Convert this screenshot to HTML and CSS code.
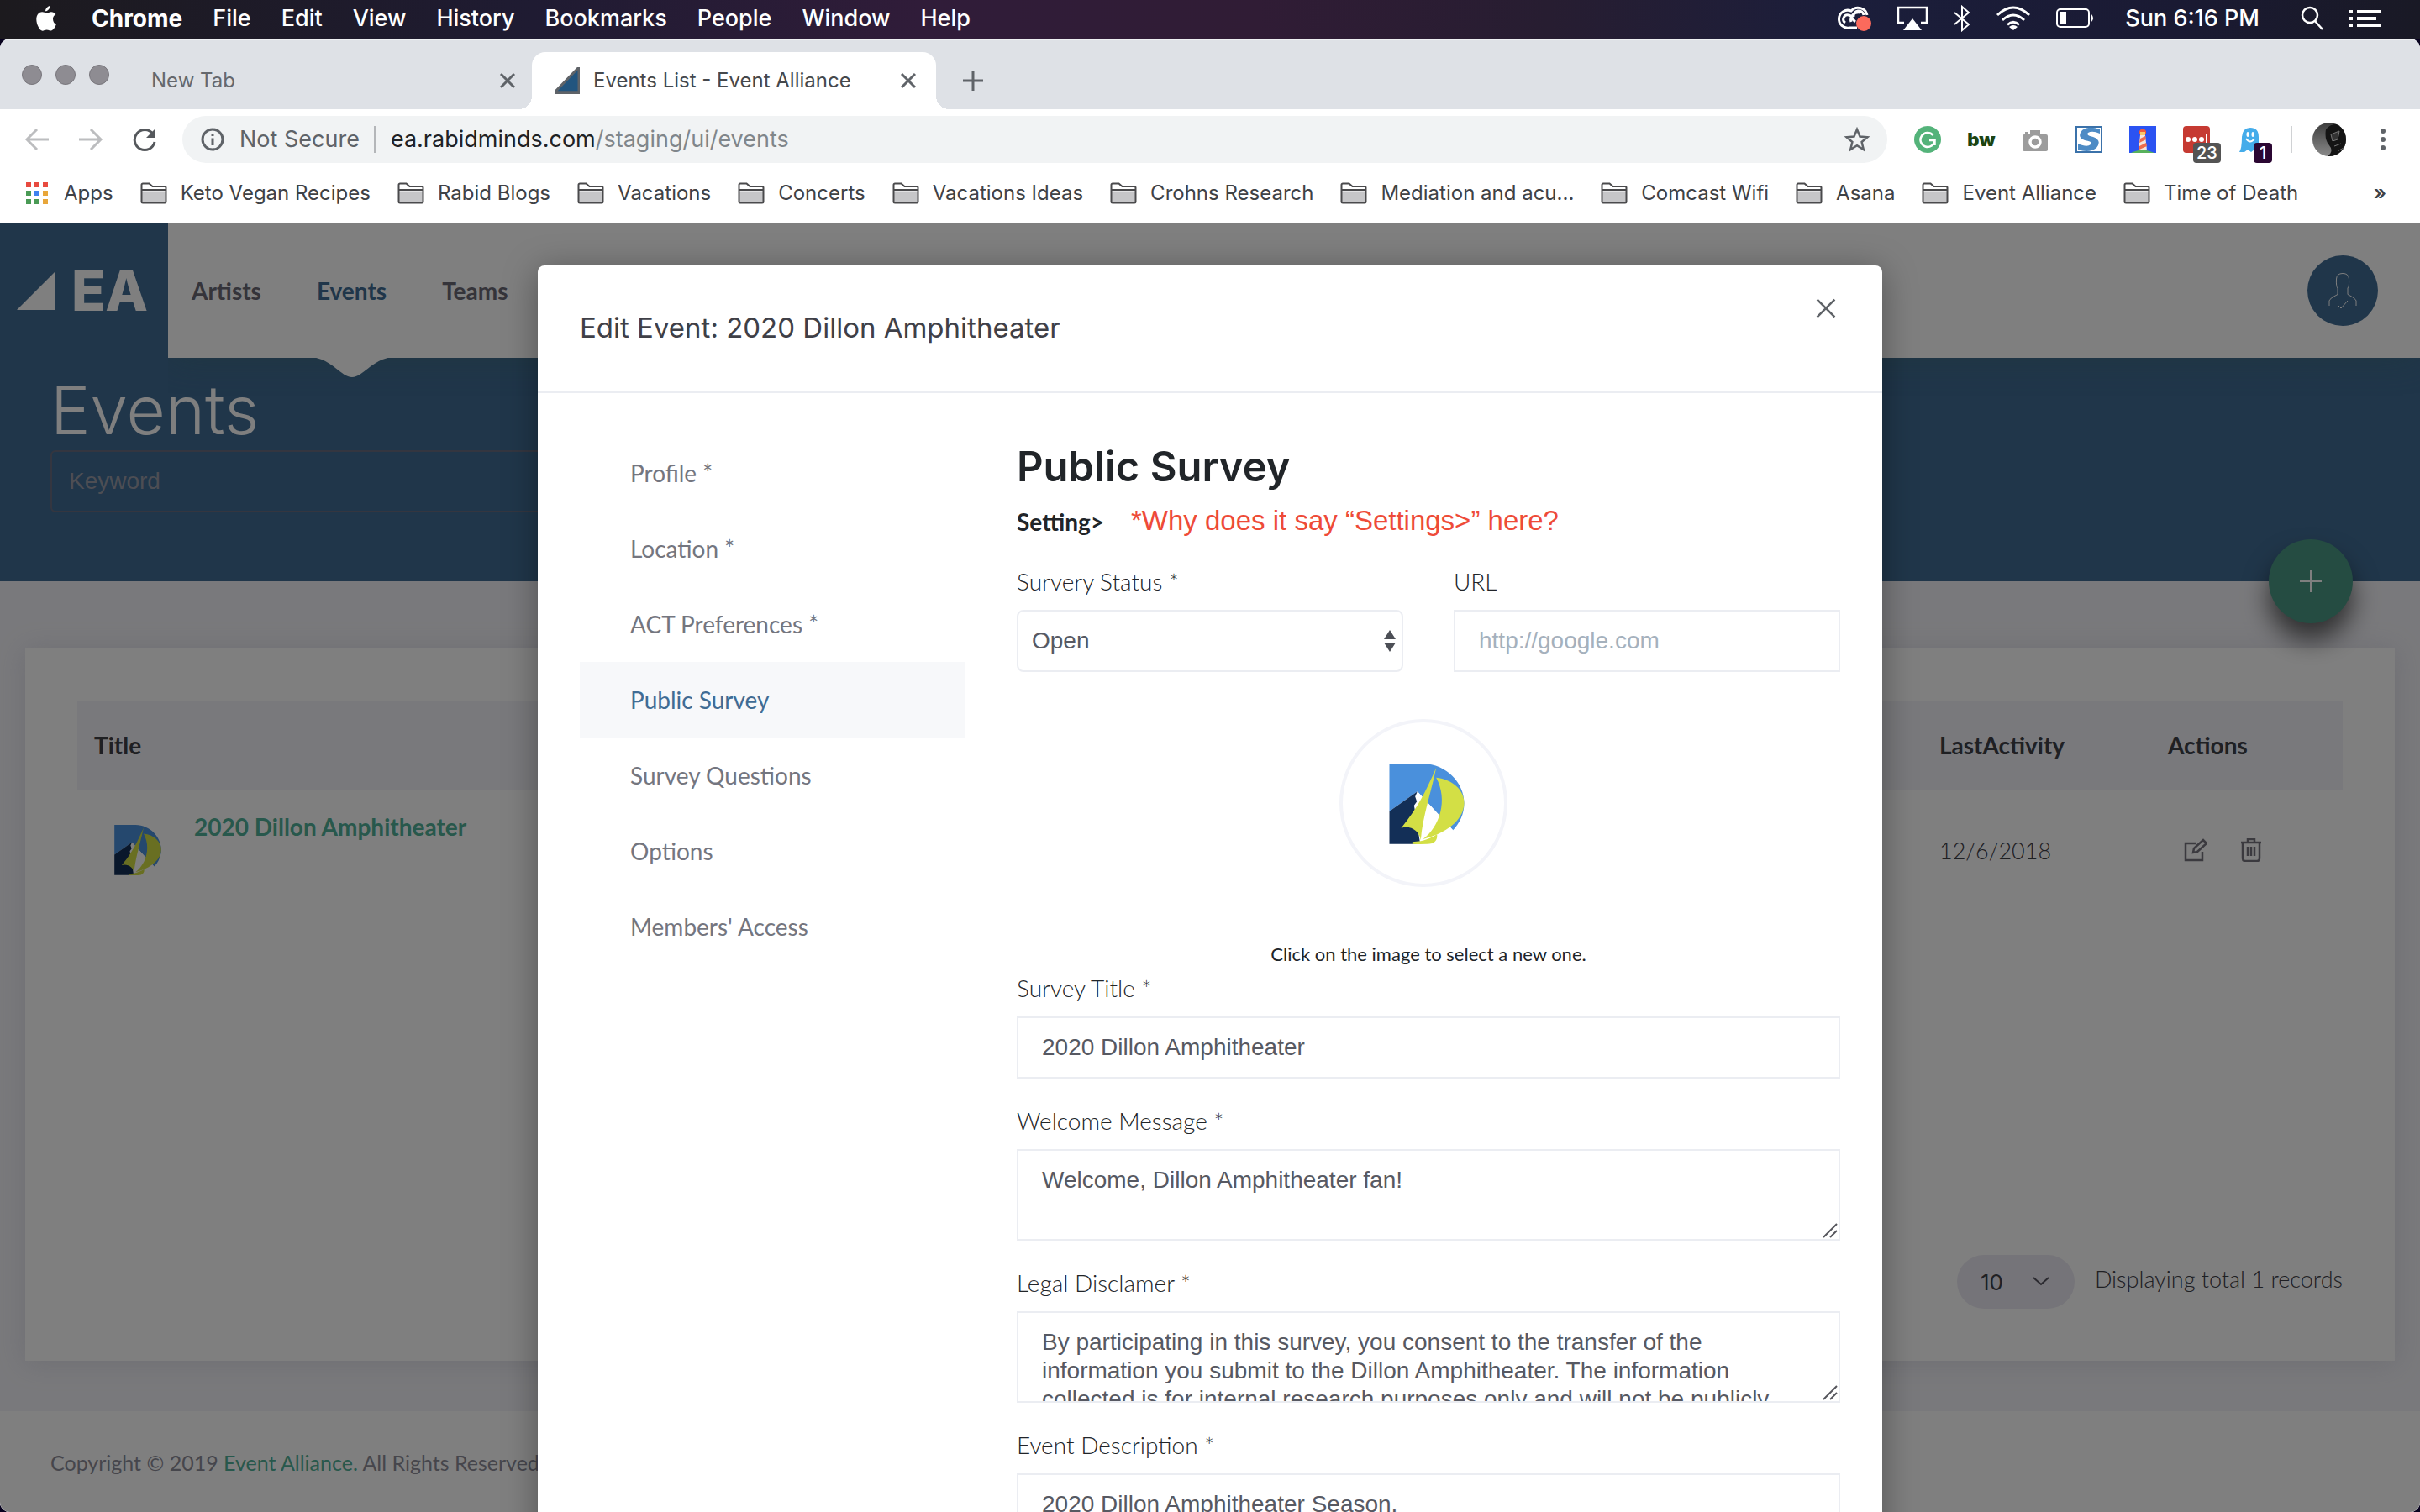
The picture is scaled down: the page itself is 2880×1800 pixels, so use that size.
FILE: index.html
```html
<!DOCTYPE html>
<html lang="en">
<head>
<meta charset="utf-8">
<title>Events List - Event Alliance</title>
<link rel="stylesheet" href="styles.css">
</head>
<body>
<svg class="defs" aria-hidden="true">
  <symbol id="folder" viewBox="0 0 32 26">
    <path d="M1.500 10.500h29V23a1.500 1.500 0 0 1-1.500 1.500H3A1.500 1.500 0 0 1 1.500 23z" fill="#c6c6c8"/>
    <path d="M1.500 3A1.500 1.500 0 0 1 3 1.500h7.500l4 3.500H29a1.500 1.500 0 0 1 1.500 1.500V23a1.500 1.500 0 0 1-1.500 1.500H3A1.500 1.500 0 0 1 1.500 23zM1.500 9h29" fill="none" stroke="#4a4a4c" stroke-width="2"/>
  </symbol>
  <symbol id="dillon" viewBox="0 0 267 288">
    <path d="M0 0H120C205 2 267 70 267 142C267 180 250 215 227 238L100 100L0 170Z" fill="#4a90dc"/>
    <path d="M100 100L227 238L120 282H90V120Z" fill="#fff"/>
    <path d="M0 170L100 100L92 118L98 136L88 150L92 172L110 287H0Z" fill="#132f57"/>
    <path d="M167 15C130 100 100 160 42 230C75 220 108 240 112 274C118 190 150 100 167 15Z" fill="#d3df45"/>
    <path d="M167 50C225 56 268 95 267 142C265 205 200 250 120 270C180 225 210 130 167 50Z" fill="#d3df45"/>
    <path d="M82 280L112 277C140 270 156 262 170 252C172 270 165 280 152 285Q130 289 82 287Z" fill="#d3df45"/>
  </symbol>
  <symbol id="close" viewBox="0 0 20 20"><path d="M2 2L18 18M18 2L2 18"/></symbol>
</svg>

<div class="menubar">
  <svg class="apple" viewBox="0 0 24 30"><path fill="#fff" d="M16.500 0c.2 3-2.500 6.300-5.400 6.300C10.900 3.400 13.500.4 16.500 0zM20 15.600c0-2.800 1.500-4.500 3.400-5.700-1.300-1.900-3.300-2.700-5.400-2.700-2.400 0-3.800 1.300-5.500 1.300-1.800 0-3.200-1.200-5.400-1.200C3.700 7.300.3 10.300.3 16c0 6 4 13.700 7.300 13.700 1.700 0 2.700-1.200 5-1.200s3 1.100 4.900 1.100c3.100 0 5.700-5.500 6.300-7.500-2.500-1-3.800-3.600-3.800-6.500z"/></svg>
  <nav class="menus">
    <strong>Chrome</strong><span>File</span><span>Edit</span><span>View</span><span>History</span><span>Bookmarks</span><span>People</span><span>Window</span><span>Help</span>
  </nav>
  <div class="status">
    <svg width="42" height="32" viewBox="0 0 42 32"><g fill="none" stroke="#fff" stroke-width="3"><path d="M36 12A11 11 0 0 0 17 7A10.500 10.500 0 1 0 15 27H24"/><path d="M10 21A5 5 0 0 1 14 12C18 12 18 17 22 20M17 20A9 9 0 0 1 28 9M20 14A6 6 0 0 1 32 12"/></g><circle cx="32" cy="22" r="9" fill="#fb6a5c"/></svg>
    <svg width="38" height="30" viewBox="0 0 38 30"><path d="M9 20H2V2H36V20H29" fill="none" stroke="#fff" stroke-width="2.500"/><path d="M19 15L30 29H8Z" fill="#fff"/></svg>
    <svg width="22" height="32" viewBox="0 0 22 32"><path d="M2 9L19 23L11 30V2L19 9L2 23" fill="none" stroke="#fff" stroke-width="2"/></svg>
    <svg width="42" height="30" viewBox="0 0 42 30"><g fill="none" stroke="#fff" stroke-width="3"><path d="M2 11Q21-7 40 11M8 17Q21 5 34 17M14 22.500Q21 16 28 22.500"/></g><path d="M21 29L16 25Q21 21 26 25Z" fill="#fff"/></svg>
    <svg width="48" height="26" viewBox="0 0 48 26"><rect x="2" y="2" width="38" height="21" rx="4" fill="none" stroke="#fff" stroke-width="2"/><rect x="5" y="5" width="8" height="15" fill="#fff"/><path d="M43 8Q47 12.500 43 17Z" fill="#fff"/></svg>
    <span class="clock">Sun 6:16 PM</span>
    <svg width="30" height="30" viewBox="0 0 30 30"><g fill="none" stroke="#fff" stroke-width="2.500"><circle cx="12" cy="11" r="9"/><path d="M18 18L27 28"/></g></svg>
    <svg width="38" height="22" viewBox="0 0 38 22"><path d="M0 3H4M9 3H38M0 11H4M9 11H32M0 19H4M9 19H38" stroke="#fff" stroke-width="4"/></svg>
  </div>
</div>

<div class="window">
  <div class="tabstrip">
    <div class="lights"><i></i><i></i><i></i></div>
    <div class="tab"><span>New Tab</span><button aria-label="Close New Tab"><svg width="20" height="20"><use href="#close"/></svg></button></div>
    <div class="tab active">
      <svg width="30" height="32" viewBox="0 0 30 32"><path d="M29 0V30H0Z" fill="#22557f"/><path d="M0 30H29V32H0Z" fill="#a9c3d8"/></svg>
      <span>Events List - Event Alliance</span><button aria-label="Close Events List"><svg width="20" height="20"><use href="#close"/></svg></button>
    </div>
    <button class="newtab" aria-label="New tab"><svg width="26" height="26" viewBox="0 0 26 26"><path d="M13 1V25M1 13H25"/></svg></button>
  </div>

  <div class="toolbar">
    <div class="arrows">
      <svg width="30" height="30" viewBox="0 0 30 30"><path d="M29 15H3M15 3L3 15L15 27" stroke="#bcbdbf"/></svg>
      <svg width="30" height="30" viewBox="0 0 30 30"><path d="M1 15H27M15 3L27 15L15 27" stroke="#bcbdbf"/></svg>
      <svg width="30" height="30" viewBox="0 0 30 30"><path d="M25 8.500A12 12 0 1 0 27 18" stroke="#55585c"/><path d="M28 2V13H17Z" fill="#55585c" stroke="none"/></svg>
    </div>
    <div class="omnibox">
      <svg width="28" height="28" viewBox="0 0 28 28"><circle cx="14" cy="14" r="12" fill="none" stroke="#5f6368" stroke-width="3"/><path d="M14 12.500V21M14 7V10" stroke="#5f6368" stroke-width="3"/></svg>
      <span class="secure">Not Secure</span>
      <span class="url">ea.rabidminds.com<em>/staging/ui/events</em></span>
      <svg class="star" width="30" height="30" viewBox="0 0 30 30"><path d="M15 3L18.500 11.500L27.500 12.200L20.600 18L22.800 27L15 22.200L7.200 27L9.400 18L2.500 12.200L11.500 11.500Z" fill="none" stroke="#5f6368" stroke-width="2.500"/></svg>
    </div>
    <div class="extensions">
      <svg viewBox="0 0 32 32"><circle cx="16" cy="16" r="16" fill="#54b37a"/><path d="M22.500 11A8.500 8.500 0 1 0 24.500 17H18M24.500 17V23" fill="none" stroke="#fff" stroke-width="2.500"/></svg>
      <b class="bw">bw</b>
      <svg viewBox="0 0 32 32"><path d="M3 10H10V5H22V10H29Q31 10 31 12V28Q31 30 29 30H3Q1 30 1 28V12Q1 10 3 10Z" fill="#9c9c9c"/><path d="M4 7H8V10H4Z" fill="#9c9c9c"/><circle cx="16" cy="19" r="6" fill="none" stroke="#fff" stroke-width="3.500"/></svg>
      <svg viewBox="0 0 32 32"><path d="M1 1H31V31H1Z" fill="#fff" stroke="#3b72aa" stroke-width="2"/><path d="M29 4Q16-1 8 5Q1 13 11 17Q22 19 18 22Q14 26 3 21V28Q16 33 25 26Q32 17 21 13Q12 11 15 8Q20 5 29 9Z" fill="#4d8bc5"/></svg>
      <svg viewBox="0 0 32 32"><path d="M0 0H32V32H0Z" fill="#2b53f2"/><path d="M2 32Q16 25 30 32Z" fill="#58b25c"/><path d="M13 11H19L21 29H11Z" fill="#f3e4dd"/><path d="M13 15L19 12L20 16L12 20ZM12 24L20 20L21 24L12 28Z" fill="#ee6b4c"/><path d="M12 6Q16 0 20 6V9H12Z" fill="#ee5a3c"/><path d="M13 7H19V11H13Z" fill="#f9c86b"/></svg>
      <span class="ext"><svg viewBox="0 0 32 32"><rect width="32" height="32" rx="4" fill="#c63a32"/><g fill="#fff"><circle cx="6" cy="16" r="3"/><circle cx="14" cy="16" r="3"/><circle cx="22" cy="16" r="3"/><path d="M27 10H28.500V22H27Z"/></g></svg><b class="badge">23</b></span>
      <span class="ext"><svg viewBox="0 0 32 32"><path d="M3 31Q6 27 6 13Q7 2 16 2Q26 2 26 13V30L21 28L17 31L13 28L9 31Z" fill="#45acea"/><g fill="#fff"><ellipse cx="13" cy="10" rx="1.500" ry="3"/><ellipse cx="19" cy="10" rx="1.500" ry="3"/></g><path d="M11 15Q16 22 21 15" fill="none" stroke="#fff" stroke-width="2"/></svg><b class="badge plum">1</b></span>
    </div>
    <div class="profile"><svg class="face" viewBox="0 0 40 40"><defs><clipPath id="round"><circle cx="20" cy="20" r="20"/></clipPath><linearGradient id="haze" x2="0" y2="1"><stop offset="0" stop-color="#3c3c3c"/><stop offset="1" stop-color="#8a8a8a"/></linearGradient></defs><g clip-path="url(#round)"><path d="M0 0H40V40H0Z" fill="url(#haze)"/><path d="M16 8Q24-2 40 4V40H18Q26 34 20 27Q14 20 16 8Z" fill="#141414"/><path d="M22 14L32 10L30 20L24 22ZM26 28L34 25M30 34L37 30" fill="#333" stroke="#777"/></g></svg></div>
    <svg class="dots" viewBox="0 0 8 28"><g fill="#5f6368"><circle cx="4" cy="4" r="3"/><circle cx="4" cy="14" r="3"/><circle cx="4" cy="24" r="3"/></g></svg>
  </div>

  <div class="bookmarks">
    <a href="#"><svg class="apps" viewBox="0 0 26 26"><path d="M0 0H6V6H0ZM10 0H16V6H10ZM20 0H26V6H20Z" fill="#e84a3f"/><path d="M0 10H6V16H0ZM0 20H6V26H0ZM10 20H16V26H10Z" fill="#4a9a55"/><path d="M10 10H16V16H10Z" fill="#3f82f0"/><path d="M20 10H26V16H20ZM20 20H26V26H20Z" fill="#e8a63a"/></svg><span>Apps</span></a>
    <a href="#"><svg class="fold"><use href="#folder"/></svg><span>Keto Vegan Recipes</span></a>
    <a href="#"><svg class="fold"><use href="#folder"/></svg><span>Rabid Blogs</span></a>
    <a href="#"><svg class="fold"><use href="#folder"/></svg><span>Vacations</span></a>
    <a href="#"><svg class="fold"><use href="#folder"/></svg><span>Concerts</span></a>
    <a href="#"><svg class="fold"><use href="#folder"/></svg><span>Vacations Ideas</span></a>
    <a href="#"><svg class="fold"><use href="#folder"/></svg><span>Crohns Research</span></a>
    <a href="#"><svg class="fold"><use href="#folder"/></svg><span>Mediation and acu...</span></a>
    <a href="#"><svg class="fold"><use href="#folder"/></svg><span>Comcast Wifi</span></a>
    <a href="#"><svg class="fold"><use href="#folder"/></svg><span>Asana</span></a>
    <a href="#"><svg class="fold"><use href="#folder"/></svg><span>Event Alliance</span></a>
    <a href="#"><svg class="fold"><use href="#folder"/></svg><span>Time of Death</span></a>
    <button class="more">»</button>
  </div>

  <div class="viewport">
    <div class="page">
      <header class="top">
        <a class="logo" href="#"><svg width="48" height="48" viewBox="0 0 48 48"><path d="M47 1V47H1Z" fill="#fff"/></svg><span>EA</span></a>
        <div class="navbar">
          <nav class="nav"><a href="#">Artists</a><a href="#" class="on">Events<svg class="notch" viewBox="0 0 96 25"><path d="M0 0C25 3 35 24 48 24S71 3 96 0Z" fill="#fff"/></svg></a><a href="#">Teams</a></nav>
          <button class="user" aria-label="Account"><svg width="36" height="44" viewBox="0 0 36 44"><path d="M2 40V34Q3 31 12 26.500V19Q10 17 10.500 8Q11 1.500 18 1.500T25.500 8Q26 17 24 19V26.500Q33 31 34 34V40M13 40L16 43L24 34" fill="none" stroke="#fff"/></svg></button>
        </div>
      </header>
      <section class="hero">
        <h1>Events</h1>
        <input class="keyword" type="text" placeholder="Keyword" aria-label="Keyword">
        <button class="fab" aria-label="Add event"><svg width="26" height="26" viewBox="0 0 26 26"><path d="M13 0V26M0 13H26" stroke="#fff" stroke-width="2"/></svg></button>
      </section>
      <main class="content">
        <div class="card">
          <table class="list">
            <thead><tr><th>Title</th><th class="c-date">LastActivity</th><th class="c-act">Actions</th></tr></thead>
            <tbody><tr>
              <td><div class="event"><svg class="thumb"><use href="#dillon"/></svg><a href="#">2020 Dillon Amphitheater</a></div></td>
              <td class="date">12/6/2018</td>
              <td><div class="acts">
                <button aria-label="Edit"><svg width="28" height="28" viewBox="0 0 28 28"><path d="M14 6H2V26H22V16M11 17L12 12L23 2L27 6L16 16Z"/></svg></button>
                <button aria-label="Delete"><svg width="24" height="28" viewBox="0 0 24 28"><path d="M0 5H24M8 5V1H16V5M2 5V24Q2 27 5 27H19Q22 27 22 24V5M8 10V21M12 10V21M16 10V21"/></svg></button>
              </div></td>
            </tr></tbody>
          </table>
          <div class="pager"><button class="size">10<svg width="20" height="12" viewBox="0 0 20 12"><path d="M1 1L10 9L19 1" fill="none" stroke="#55535f" stroke-width="2"/></svg></button><span>Displaying total 1 records</span></div>
        </div>
      </main>
      <footer class="foot"><p>Copyright © 2019 <a href="#">Event Alliance.</a> All Rights Reserved.</p></footer>
    </div>

    <div class="overlay">
      <section class="modal" role="dialog" aria-labelledby="dlg">
        <header class="mhead"><h2 id="dlg">Edit Event: 2020 Dillon Amphitheater</h2><button aria-label="Close"><svg width="26" height="26"><use href="#close"/></svg></button></header>
        <div class="mbody">
          <nav class="side">
            <a href="#">Profile *</a><a href="#">Location *</a><a href="#">ACT Preferences *</a><a href="#" class="on">Public Survey</a><a href="#">Survey Questions</a><a href="#">Options</a><a href="#">Members' Access</a>
          </nav>
          <form class="form">
            <h3>Public Survey</h3>
            <p class="setting"><b>Setting&gt;</b><span class="remark">*Why does it say “Settings&gt;” here?</span></p>
            <div class="pair">
              <div class="field"><label for="st">Survery Status *</label><div class="pick"><select id="st"><option>Open</option></select><svg width="14" height="26" viewBox="0 0 14 26"><path d="M7 0L14 11H0ZM0 15H14L7 26Z" fill="#4c4f56"/></svg></div></div>
              <div class="field"><label for="url">URL</label><input id="url" type="text" placeholder="http://google.com"></div>
            </div>
            <div class="picture"><button type="button" aria-label="Select image"><svg class="big"><use href="#dillon"/></svg></button></div>
            <p class="hint">Click on the image to select a new one.</p>
            <div class="field"><label for="ti">Survey Title *</label><input id="ti" type="text" value="2020 Dillon Amphitheater"></div>
            <div class="field"><label for="we">Welcome Message *</label><div class="area"><textarea id="we">Welcome, Dillon Amphitheater fan!</textarea><svg width="18" height="18" viewBox="0 0 18 18"><path d="M1 17L17 1M9 17L17 9"/></svg></div></div>
            <div class="field"><label for="le">Legal Disclamer *</label><div class="area"><textarea id="le">By participating in this survey, you consent to the transfer of the information you submit to the Dillon Amphitheater. The information collected is for internal research purposes only and will not be publicly</textarea><svg width="18" height="18" viewBox="0 0 18 18"><path d="M1 17L17 1M9 17L17 9"/></svg></div></div>
            <div class="field"><label for="de">Event Description *</label><div class="area"><textarea id="de">2020 Dillon Amphitheater Season.</textarea></div></div>
          </form>
        </div>
      </section>
    </div>
  </div>
</div>
</body>
</html>
```
FILE: styles.css
```css
*{box-sizing:border-box}
html,body{height:100%}
body{margin:0;display:flex;flex-direction:column;overflow:hidden;background:#08021f;font-family:Lato,sans-serif;font-size:28px}
button{border:0;background:none;padding:0;font:inherit;color:inherit;display:flex;align-items:center;justify-content:center}
a{color:inherit;text-decoration:none}
h1,h2,h3,p{margin:0}
svg{display:block;flex:none}
.defs{position:absolute;width:0;height:0}

/* system menu bar */
.menubar{flex:none;height:46px;padding:0 46px 2px 43px;display:flex;align-items:center;color:#fff;font:500 27px/44px Inter,sans-serif;background:linear-gradient(90deg,#1c1a1e,#1f1b32 22%,#301c39 38%,#301c35 52%,#271d31 64%,#1b1e3b 76%,#1a1a33 90%,#191925)}
.apple{width:24px;height:30px;margin-right:42px}
.menus{display:flex;gap:36px}
.menus strong{font-size:28px}
.status{margin-left:auto;display:flex;align-items:center;gap:29px}
.clock{margin:0 19px 0 6px}

/* browser window */
.window{flex:1;min-height:0;display:flex;flex-direction:column;background:#fff;border-radius:12px;overflow:hidden}
.tabstrip{height:84px;flex:none;background:#dee1e6;border-top:2px solid #eef0f2;display:flex;align-items:flex-end;font:24px/68px Inter,sans-serif;color:#65686d}
.lights{display:flex;gap:16px;padding:0 50px 29px 26px}
.lights i{width:24px;height:24px;border-radius:50%;background:#8e8c92;border:1px solid #79777d}
.tab{height:68px;width:453px;padding:0 19px 0 0;display:flex;align-items:center}
.tab button,.newtab{margin-left:auto;height:68px}
.tab svg,.newtab svg,.mhead svg{stroke:#5f6368;stroke-width:3;fill:none}
.tab.active{position:relative;width:481px;padding:0 23px 0 27px;background:#fff;border-radius:16px 16px 0 0;color:#45484c}
.tab.active span{margin-left:16px}
.tab.active::before,.tab.active::after{content:"";position:absolute;bottom:0;width:16px;height:16px}
.tab.active::before{left:-16px;background:radial-gradient(circle at 0 0,transparent 16px,#fff 16px)}
.tab.active::after{right:-16px;background:radial-gradient(circle at 100% 0,transparent 16px,#fff 16px)}
.newtab{margin-left:31px}

.toolbar{height:72px;flex:none;padding:0 40px 0 29px;display:flex;align-items:center}
.arrows{display:flex;gap:34px;margin-right:30px}
.arrows svg{fill:none;stroke-width:3}
.omnibox{flex:1;height:56px;border-radius:28px;background:#f1f3f4;display:flex;align-items:center;padding:0 21px 0 22px;font:27px/56px Inter,sans-serif;color:#5f6368}
.secure{margin-left:18px;padding-right:17px;line-height:32px;border-right:2px solid #b4b6b9}
.url{margin-left:18px;color:#202124}
.url em{font-style:normal;color:#80868b}
.star{margin-left:auto}
.extensions{display:flex;align-items:center;gap:32px;margin-left:32px}
.extensions svg{width:32px;height:32px}
.bw{width:32px;font:900 22px/32px Inter,sans-serif;color:#1d4410;display:flex;justify-content:center}
.ext{position:relative}
.badge{position:absolute;left:12px;top:20px;height:24px;padding:0 4px;border-radius:4px;background:#545454;color:#fff;font:500 20px/24px Inter,sans-serif}
.badge.plum{left:20px;padding:0 7px;background:#2b0632}
.profile{margin-left:32px;height:32px;padding-left:24px;border-left:2px solid #d0d2d4;display:flex;align-items:center}
.face{width:40px;height:40px;overflow:visible}
.dots{width:8px;height:40px;margin-left:40px}

.bookmarks{height:64px;flex:none;border-bottom:1px solid #b2b2b2;padding:0 40px 8px 31px;display:flex;align-items:center;gap:32px;font:24px/56px Inter,sans-serif;color:#3f4246;white-space:nowrap}
.bookmarks a{display:flex;align-items:center;gap:16px}
.bookmarks .apps{width:26px;height:26px;margin-right:3px}
.fold{width:32px;height:26px}
.more{margin-left:auto;font-weight:600}

/* events page */
.viewport{position:relative;flex:1;min-height:0;overflow:hidden}
.page{height:100%;display:flex;flex-direction:column;background:#f3f3f8;color:#3f4047}
.top{flex:none;height:160px;display:flex;background:#406c94}
.logo{width:200px;display:flex;align-items:center;gap:18px;padding-left:19px;color:#fff;font:800 66px/160px Inter,sans-serif}
.navbar{flex:1;display:flex;align-items:center;justify-content:space-between;padding:0 50px 0 28px;background:#fff;box-shadow:0 0 40px rgba(64,110,90,.3);position:relative;z-index:1;clip-path:inset(0 0 -60px 0)}
.nav{display:flex;gap:66px;font-weight:700;color:#6a6875}
.nav a{position:relative;line-height:160px}
.nav .on{color:#406c94}
.notch{position:absolute;top:159px;left:50%;width:96px;height:25px;margin-left:-48px}
.user{width:84px;height:84px;border-radius:50%;background:#406c94}
.hero{position:relative;flex:none;background:#406c94;padding:14px 60px 82px;display:flex;flex-direction:column}
.hero h1{font:300 80px/96px Inter,sans-serif;color:#fff}
.keyword{width:50%;height:74px;padding:0 20px;border:2px solid #686d80;border-radius:6px;background:none;font:28px "Liberation Sans",sans-serif}
.keyword::placeholder{color:#9a9ca8;opacity:1}
.fab{position:absolute;right:80px;bottom:-50px;width:100px;height:100px;border-radius:50%;background:#4a9884;box-shadow:0 20px 30px rgba(0,0,0,.6)}
.content{flex:1;display:flex;padding:80px 30px 60px}
.card{flex:1;display:flex;flex-direction:column;background:#fff;padding:62px;box-shadow:0 2px 30px rgba(150,150,180,.25)}
.list{width:100%;border-collapse:collapse;table-layout:fixed}
.list th{height:106px;padding:0 20px;background:#f3f3f8;text-align:left;font-weight:700}
.list td{height:144px;padding:0 20px}
.c-date{width:272px}
.c-act{width:228px}
.event{display:flex;align-items:center;gap:39px;padding-left:24px}
.thumb{width:56px;height:60px}
.event a{height:96px;line-height:40px;font-weight:700;color:#50b098}
.date,.pager{font-size:27px;font-weight:300}
.acts{display:flex;gap:40px;padding-left:19px}
.acts svg{fill:none;stroke:#77757f;stroke-width:2.500}
.pager{margin-top:auto;display:flex;justify-content:flex-end;gap:24px;line-height:58px}
.size{width:140px;height:64px;border-radius:32px;background:#ebe9f2;justify-content:space-between;padding:0 30px 0 28px;font:26px Inter,sans-serif}
.foot{flex:none;height:120px;padding-left:60px;background:#fff;font-size:25px;line-height:122px;color:#8d8c98}
.foot a{color:#50b098}

/* edit dialog */
.overlay{position:absolute;inset:0;z-index:2;background:rgba(0,0,0,.5);display:flex;justify-content:center;align-items:flex-start;padding-top:50px}
.modal{width:1600px;background:#fff;border-radius:8px 8px 0 0;box-shadow:0 6px 40px rgba(0,0,0,.35)}
.mhead{height:152px;border-bottom:2px solid #ebedf2;display:flex;justify-content:space-between;padding:0 54px 0 50px}
.mhead h2{font:400 33px/148px Inter,sans-serif;color:#3f4047}
.mhead button{height:102px}
.mhead svg{stroke-width:2}
.mbody{display:flex;gap:62px;padding:50px}
.side{width:458px;display:flex;flex-direction:column;line-height:90px;color:#74767f}
.side a{padding-left:60px}
.side .on{background:#f7f8fa;color:#406c94}
.form{flex:1;color:#212529}
.form h3{font:600 49px/76px Inter,sans-serif;margin-bottom:6px}
.setting{display:flex;gap:32px;line-height:42px;margin-bottom:30px}
.remark{font:33px/40px "Liberation Sans",sans-serif;color:#ee4b38}
.pair{display:grid;grid-template-columns:1fr 1fr;gap:60px}
.field{display:flex;flex-direction:column;gap:14px}
.field+.field{margin-top:30px}
.pair .field{margin:0}
.field label{font-weight:300;line-height:40px}
.field input,.field select,.field textarea{display:block;width:100%;border:2px solid #ebedf2;border-radius:0;background:#fff;padding:0 28px;font:28px/34px "Liberation Sans",sans-serif;color:#575962}
.field input,.field select{height:74px}
.field input::placeholder{color:#a5b1bd;opacity:1}
.field select{appearance:none;border-radius:8px;padding:0 16px}
.field textarea{height:109px;padding:18px 28px;resize:none;overflow:hidden}
.pick,.area{position:relative}
.pick svg{position:absolute;right:9px;top:24px;pointer-events:none}
.area svg{position:absolute;right:3px;bottom:3px;stroke:#55565c;stroke-width:2;pointer-events:none}
.picture{padding:56px 12px 60px 0;display:flex;justify-content:center}
.picture button{width:200px;height:200px;padding:2px 0 0 8px;border:4px solid #f3f4f9;border-radius:50%}
.big{width:90px;height:96px}
.hint{text-align:center;font-size:22px;line-height:40px}
```
